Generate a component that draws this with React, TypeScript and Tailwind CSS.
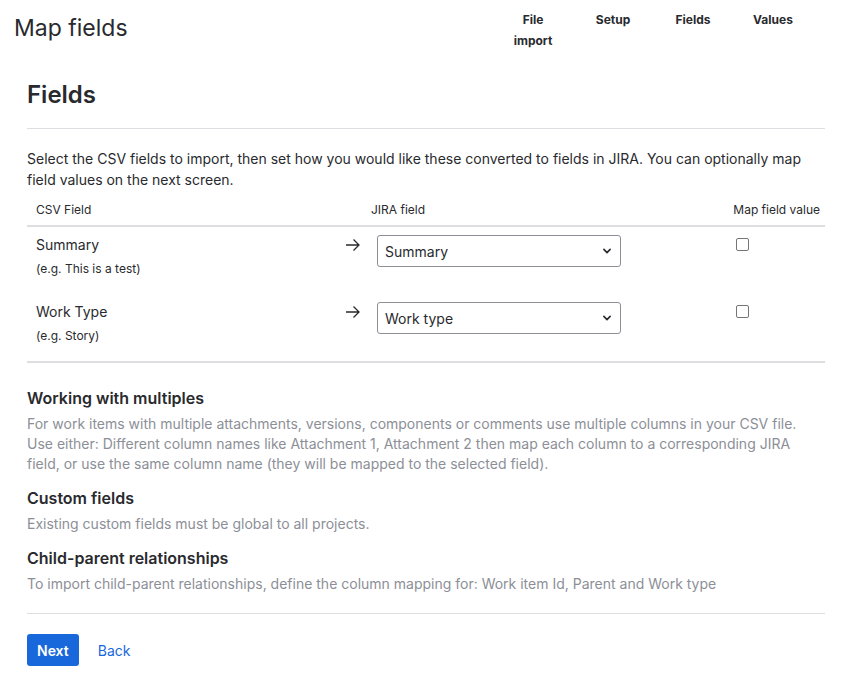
import React from 'react';

const steps = ['File import', 'Setup', 'Fields', 'Values'];

const rows = [
  { name: 'Summary', example: '(e.g. This is a test)', value: 'Summary' },
  { name: 'Work Type', example: '(e.g. Story)', value: 'Work type' },
];

const notes = [
  {
    title: 'Working with multiples',
    text: 'For work items with multiple attachments, versions, components or comments use multiple columns in your CSV file. Use either: Different column names like Attachment 1, Attachment 2 then map each column to a corresponding JIRA field, or use the same column name (they will be mapped to the selected field).',
  },
  {
    title: 'Custom fields',
    text: 'Existing custom fields must be global to all projects.',
  },
  {
    title: 'Child-parent relationships',
    text: 'To import child-parent relationships, define the column mapping for: Work item Id, Parent and Work type',
  },
];

const ChevronDown = () => (
  <svg width="10" height="10" viewBox="0 0 16 16" className="text-[#292a2e]">
    <path d="M3 5.5l5 5 5-5" fill="none" stroke="currentColor" strokeWidth="2.6" strokeLinecap="round" strokeLinejoin="round" />
  </svg>
);

const ArrowRight = () => (
  <svg width="16" height="14" viewBox="0 0 16 14" className="text-[#292a2e]">
    <path d="M1 7h13M8.5 1.5L14 7l-5.5 5.5" fill="none" stroke="currentColor" strokeWidth="1.3" />
  </svg>
);

const App: React.FC = () => (
  <div className="min-h-screen bg-white text-[#292a2e] font-['Inter','Liberation_Sans',sans-serif]">
    <div className="flex justify-between pl-[14px] pr-[30px]">
      <h1 className="pt-[13px] text-[23px] leading-[30px] font-normal">Map fields</h1>
      <ol className="flex pt-[9px]">
        {steps.map((s) => (
          <li key={s} className="w-[80px] px-[12px] text-center text-[12px] leading-[21px] font-bold">
            {s}
          </li>
        ))}
      </ol>
    </div>

    <div className="px-[27px] pr-[18px]">
      <h2 className="mt-[29px] text-[24px] leading-[30px] font-semibold">Fields</h2>
      <div className="mt-[18px] border-t border-[#dddee1]" />

      <p className="mt-[19px] text-[14px] leading-[21px]">
        Select the CSV fields to import, then set how you would like these converted to fields in JIRA. You can optionally map field values on the next screen.
      </p>

      <table className="mt-[11px] w-full text-left">
        <thead>
          <tr className="border-b-2 border-[#dddee1] text-[12px] leading-[16px]">
            <th className="pl-[9px] pt-[1px] pb-[7px] font-normal w-[310px]">CSV Field</th>
            <th className="pb-[7px] font-normal" colSpan={2}>
              <span className="pl-[34px]">JIRA field</span>
            </th>
            <th className="pb-[7px] pr-[5px] font-normal text-right">Map field value</th>
          </tr>
        </thead>
        <tbody>
          {rows.map((r, i) => (
            <tr key={r.name} className={i === rows.length - 1 ? 'border-b-2 border-[#dddee1]' : ''}>
              <td className="pl-[9px] pt-[8px] pb-[17px] align-top">
                <div className="text-[14px] leading-[20px]">{r.name}</div>
                <div className="mt-[6px] text-[12px] leading-[16px]">{r.example}</div>
              </td>
              <td className="w-[40px] pt-[11px] align-top pr-[16px]">
                <div className="flex justify-end">
                  <ArrowRight />
                </div>
              </td>
              <td className="pt-[8px] align-top">
                <div className="flex h-[32px] w-[244px] items-center justify-between rounded-[3px] border border-[#8c8f97] pl-[7px] pr-[8px] text-[14px]">
                  <span>{r.value}</span>
                  <ChevronDown />
                </div>
              </td>
              <td className="pt-[11px] align-top">
                <div className="ml-[33px] h-[13px] w-[13px] rounded-[2px] border border-[#767676]" />
              </td>
            </tr>
          ))}
        </tbody>
      </table>

      <div className="mt-[25px] flex flex-col gap-[14px]">
        {notes.map((n) => (
          <div key={n.title}>
            <h3 className="text-[16px] leading-[20px] font-semibold">{n.title}</h3>
            <p className="mt-[6px] text-[14px] leading-[20px] text-[#8c8f97]">{n.text}</p>
          </div>
        ))}
      </div>

      <div className="mt-[19px] border-t border-[#dddee1]" />

      <div className="mt-[20px] flex items-center gap-[19px]">
        <button className="h-[32px] rounded-[3px] bg-[#1868db] px-[10px] text-[14px] font-semibold text-white">
          Next
        </button>
        <a className="text-[14px] text-[#1868db]">Back</a>
      </div>
    </div>
  </div>
);

export default App;
